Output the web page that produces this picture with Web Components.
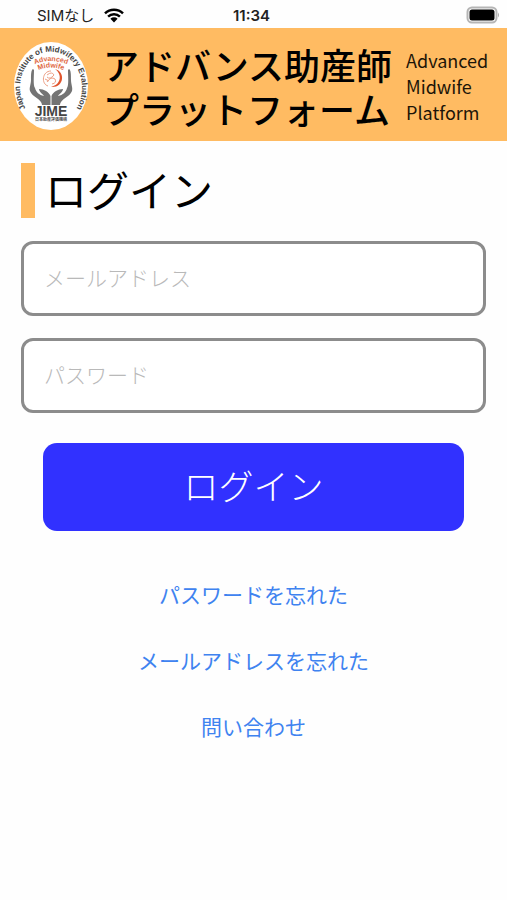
<!DOCTYPE html>
<html lang="ja">
<head>
<meta charset="utf-8">
<meta name="viewport" content="width=device-width, initial-scale=1">
<title>アドバンス助産師プラットフォーム</title>
<style>
  body {
    margin: 0;
    background: #fefefe;
    color: #000;
    font-family: "Noto Sans CJK JP", sans-serif;
  }
</style>
</head>
<body>
<login-page></login-page>

<script>
class StatusBar extends HTMLElement {
    constructor() {
        super();
        this.attachShadow({ mode: "open" });
        this.render();
    }

    render() {
        this.shadowRoot.innerHTML = `
        <style>
          :host {
            display: grid;
            grid-template-columns: 1fr auto 1fr;
            align-items: center;
            height: 28px;
            padding: 0 7px 0 37px;
            font-family: Inter, "Noto Sans CJK JP", sans-serif;
            font-size: 15px;
            line-height: 28px;
            color: #222;
          }

          .carrier {
            display: flex;
            align-items: center;
            gap: 10px;
          }

          .carrier span {
            padding-top: 2px;
          }

          time {
            padding-top: 2px;
            margin-right: 34px;
            font-weight: 600;
          }

          .battery {
            justify-self: end;
          }

          svg {
            display: block;
          }
        </style>
        <div class="carrier">
          <span>SIMなし</span>
          <svg width="20" height="15" viewBox="0 0 20 15">
            <path d="M1 5.4A13 13 0 0 1 19 5.4M4.1 8.6A8.5 8.5 0 0 1 15.9 8.6" fill="none" stroke="#000" stroke-width="2.5"/>
            <path d="M6.4 10.7A5.2 5.2 0 0 1 13.6 10.7L10 14.5Z"/>
          </svg>
        </div>
        <time>11:34</time>
        <svg class="battery" width="34" height="18" viewBox="0 0 34 18">
          <rect x="1.5" y="1.5" width="29" height="15" rx="4.5" fill="#fff" stroke="#b5b5b5" stroke-width="2"/>
          <rect x="3.5" y="3.5" width="25" height="11" rx="2.5"/>
          <path d="M32 6.5Q34 9 32 11.5Z" fill="#aaa"/>
        </svg>
      `;
    }
}

class JimeLogo extends HTMLElement {
    constructor() {
        super();
        this.attachShadow({ mode: "open" });
        this.render();
    }

    render() {
        this.shadowRoot.innerHTML = `
        <style>
          :host {
            display: block;
          }

          svg {
            display: block;
            overflow: visible;
            font-family: "Liberation Sans", "Noto Sans CJK JP", sans-serif;
            font-weight: bold;
            text-anchor: middle;
          }
        </style>
        <svg width="76" height="90" viewBox="0 0 76 90" role="img" aria-label="JIME">
          <defs>
            <path id="ring" d="M16 72A31 36 0 1 1 60 72"/>
            <path id="arc" d="M18 25Q38 15 58 25"/>
            <path id="arc2" d="M22 31Q38 22 54 31"/>
          </defs>
          <ellipse cx="38" cy="45" rx="37" ry="44" fill="#fff"/>
          <text font-size="8" fill="#444"><textPath href="#ring" startOffset="50%">Japan Institute of Midwifery Evaluation</textPath></text>
          <text font-size="7" fill="#e0683f"><textPath href="#arc" startOffset="50%">Advanced</textPath></text>
          <text font-size="7" fill="#e0683f"><textPath href="#arc2" startOffset="50%">Midwife</textPath></text>
          <path d="M42 28C53 31 51 47 38 46C49 43 49 33 42 28Z" fill="#e0552d"/>
          <path d="M38 30C29 30 28 43 35 45M34 34q5-4 7 0q-4 5-7 2M34 41q4-6 8-3q2 4-3 5M32 38l4 2" fill="none" stroke="#eda086" stroke-width="1"/>
          <g id="hand" fill="#747474">
            <path d="M20 28C18 29 18 34 18 39C18 43 16 47 17 50C19 56 29 58 29 64H37.5V55C36 51 31 48 26 48C26 51 30 53 31 55C26 54 23 51 22 47C20 44 21 36 21 29Z"/>
          </g>
          <use href="#hand" transform="matrix(-1 0 0 1 76 0)"/>
          <text x="38" y="75" font-size="14" fill="#444">JIME</text>
          <text x="38" y="80" font-size="4" fill="#555">日本助産評価機構</text>
        </svg>
      `;
    }
}

class AppHeader extends HTMLElement {
    constructor() {
        super();
        this.attachShadow({ mode: "open" });
        this.render();
    }

    render() {
        this.shadowRoot.innerHTML = `
        <style>
          :host {
            display: block;
          }

          header {
            display: flex;
            align-items: center;
            box-sizing: border-box;
            min-height: 113px;
            padding: 2px 13px 0;
            background: #ffbb62;
          }

          .title {
            margin-left: 14px;
            font-size: 36px;
            font-weight: 500;
            line-height: 44px;
            white-space: nowrap;
          }

          .subtitle {
            margin-left: 14px;
            font-size: 18px;
            line-height: 26px;
            color: #1c1508;
          }
        </style>
        <header>
          <jime-logo></jime-logo>
          <div class="title"><slot name="title"></slot></div>
          <div class="subtitle"><slot name="subtitle"></slot></div>
        </header>
      `;
    }
}

class PageHeading extends HTMLElement {
    constructor() {
        super();
        this.attachShadow({ mode: "open" });
        this.render();
    }

    render() {
        this.shadowRoot.innerHTML = `
        <style>
          :host {
            display: block;
          }

          h1 {
            margin: 0;
            padding: 0 0 4px 10px;
            border-left: 14px solid #ffbb62;
            font-size: 42px;
            font-weight: 400;
            line-height: 51px;
          }
        </style>
        <h1><slot></slot></h1>
      `;
    }
}

class TextField extends HTMLElement {
    constructor() {
        super();
        this.attachShadow({ mode: "open" });
        this.render();
    }

    connectedCallback() {
        const label = this.getAttribute("label");
        const input = this.shadowRoot.querySelector("input");
        input.type = this.getAttribute("type") || "text";
        input.placeholder = label;
        input.setAttribute("aria-label", label);
    }

    render() {
        this.shadowRoot.innerHTML = `
        <style>
          :host {
            display: block;
          }

          input {
            display: block;
            box-sizing: border-box;
            width: 100%;
            height: 75px;
            padding: 0 20px 3px;
            border: 3px solid #8c8c8c;
            border-radius: 12px;
            background: #fff;
            color: #000;
            font: inherit;
            font-size: 21px;
          }

          input::placeholder {
            color: #b9b9b9;
            font-weight: 300;
          }
        </style>
        <input>
      `;
    }
}

class SubmitButton extends HTMLElement {
    constructor() {
        super();
        this.attachShadow({ mode: "open" });
        this.render();
    }

    render() {
        this.shadowRoot.innerHTML = `
        <style>
          :host {
            display: block;
          }

          button {
            display: block;
            width: 100%;
            height: 88px;
            padding: 0 0 6px;
            border: none;
            border-radius: 14px;
            background: #3131ff;
            color: #fff;
            font: inherit;
            font-size: 35px;
            font-weight: 300;
            cursor: pointer;
          }
        </style>
        <button type="button"><slot></slot></button>
      `;
    }
}

class TextLink extends HTMLElement {
    constructor() {
        super();
        this.attachShadow({ mode: "open" });
        this.render();
    }

    render() {
        this.shadowRoot.innerHTML = `
        <style>
          :host {
            display: block;
          }

          a {
            color: #3f83f0;
            font-size: 21px;
            line-height: 32px;
            text-decoration: none;
          }
        </style>
        <a href="#"><slot></slot></a>
      `;
    }
}

class LoginPage extends HTMLElement {
    constructor() {
        super();
        this.attachShadow({ mode: "open" });
        this.render();
    }

    render() {
        this.shadowRoot.innerHTML = `
        <style>
          :host {
            display: block;
          }

          main {
            padding: 22px 21px;
          }

          form {
            display: grid;
            gap: 22px;
            margin-top: 23px;
          }

          submit-button {
            margin: 8px 22px 0;
          }

          nav {
            display: grid;
            justify-items: center;
            gap: 34px;
            margin-top: 47px;
          }
        </style>
        <status-bar></status-bar>
        <app-header>
          <span slot="title">アドバンス助産師<br>プラットフォーム</span>
          <span slot="subtitle">Advanced<br>Midwife<br>Platform</span>
        </app-header>
        <main>
          <page-heading>ログイン</page-heading>
          <form>
            <text-field type="email" label="メールアドレス"></text-field>
            <text-field type="password" label="パスワード"></text-field>
            <submit-button>ログイン</submit-button>
          </form>
          <nav>
            <text-link>パスワードを忘れた</text-link>
            <text-link>メールアドレスを忘れた</text-link>
            <text-link>問い合わせ</text-link>
          </nav>
        </main>
      `;
    }
}

customElements.define("status-bar", StatusBar);
customElements.define("jime-logo", JimeLogo);
customElements.define("app-header", AppHeader);
customElements.define("page-heading", PageHeading);
customElements.define("text-field", TextField);
customElements.define("submit-button", SubmitButton);
customElements.define("text-link", TextLink);
customElements.define("login-page", LoginPage);
</script>
</body>
</html>
